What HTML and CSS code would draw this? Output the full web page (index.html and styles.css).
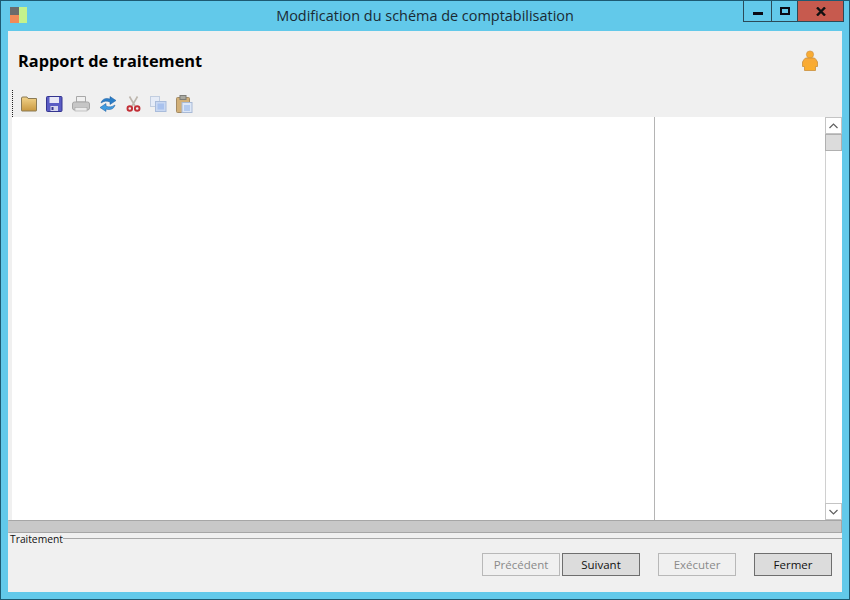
FILE: index.html
```html
<!DOCTYPE html>
<html lang="fr">
<head>
<meta charset="utf-8">
<title>Modification du schéma de comptabilisation</title>
<link rel="stylesheet" href="styles.css">
</head>
<body>
<div class="window">
  <header class="titlebar">
    <svg class="app-icon" width="18" height="18" viewBox="0 0 18 18">
      <rect x="0" y="0" width="9" height="8" fill="#6b6b6b"/>
      <rect x="0" y="8" width="9" height="8" fill="#f08a58"/>
      <rect x="9" y="0" width="8" height="16" fill="#c4f28c"/>
    </svg>
    <div class="title">Modification du schéma de comptabilisation</div>
    <div class="controls">
      <div class="ctl ctl-min"><span class="glyph-min"></span></div>
      <div class="ctl ctl-max"><span class="glyph-max"></span></div>
      <div class="ctl ctl-close">
        <svg width="10" height="9" viewBox="0 0 10 9"><path d="M1 0.5 L9 8.5 M9 0.5 L1 8.5" stroke="#111" stroke-width="2.4" fill="none"/></svg>
      </div>
    </div>
  </header>
  <main class="client">
    <div class="heading">
      <h1>Rapport de traitement</h1>
      <svg class="user" width="18" height="22" viewBox="0 0 18 22">
        <defs>
          <linearGradient id="userFill" x1="0" y1="0" x2="0" y2="1">
            <stop offset="0" stop-color="#f7a93a"/>
            <stop offset="1" stop-color="#fbae2c"/>
          </linearGradient>
        </defs>
        <circle cx="9" cy="4.5" r="3.6" fill="url(#userFill)" stroke="#c98f3e" stroke-width="0.6"/>
        <path d="M4.5 8 H13.5 L15 9.5 L16.5 12 V16.5 H14.5 V20.5 H3.5 V16.5 H1.5 V12 L3 9.5 Z" fill="url(#userFill)" stroke="#c98f3e" stroke-width="0.8"/>
      </svg>
    </div>
    <div class="toolbar">
      <div class="grip"></div>
      <svg class="tool" width="16" height="16" viewBox="0 0 16 16">
        <defs>
          <linearGradient id="folderFill" x1="0" y1="0" x2="0" y2="1">
            <stop offset="0" stop-color="#f2d38a"/>
            <stop offset="1" stop-color="#c9983f"/>
          </linearGradient>
        </defs>
        <path d="M0.5 2 Q0.5 1 2 1 H6 L7 2.5 H15.5 V14.5 Q15.5 15 15 15 H1 Q0.5 15 0.5 14.5 Z" fill="url(#folderFill)" stroke="#8a7a55"/>
      </svg>
      <svg class="tool" width="17" height="16" viewBox="0 0 17 16">
        <rect x="0.5" y="0.5" width="15.5" height="15" rx="1" fill="#5a5cc4" stroke="#34358f"/>
        <rect x="3.5" y="1" width="9.5" height="6" fill="#e8e8f6"/>
        <rect x="4.5" y="10" width="7.5" height="5" fill="#d6d6ee"/>
        <rect x="5.5" y="11" width="2" height="3" fill="#34358f"/>
      </svg>
      <svg class="tool" width="18" height="16" viewBox="0 0 18 16">
        <path d="M4.5 0.5 H13.5 V6 H4.5 Z" fill="#f0f0f0" stroke="#a8a8a8"/>
        <rect x="0.5" y="6" width="17" height="8" rx="2" fill="#c6c6c6" stroke="#a6a6a6"/>
        <rect x="3" y="11.5" width="12" height="3.5" fill="#ececec" stroke="#a8a8a8" stroke-width="0.6"/>
      </svg>
      <svg class="tool" width="18" height="16" viewBox="0 0 18 16">
        <path d="M2 7 C3 3 7 1.5 11 3 L11 0.5 L17 4.5 L11 8.5 L11 6 C8 4.5 5 5 2 7 Z" fill="#2a7ec8" stroke="#1c5a9f" stroke-width="0.5"/>
        <path d="M16 9 C15 13 11 14.5 7 13 L7 15.5 L1 11.5 L7 7.5 L7 10 C10 11.5 13 11 16 9 Z" fill="#3f9be0" stroke="#1c5a9f" stroke-width="0.5"/>
      </svg>
      <svg class="tool" width="15" height="16" viewBox="0 0 15 16">
        <path d="M3.5 0.5 L9 10 M11.5 0.5 L6 10" stroke="#bdb6ad" stroke-width="1.6" fill="none"/>
        <circle cx="3.8" cy="12.5" r="2.3" fill="none" stroke="#c22f36" stroke-width="1.9"/>
        <circle cx="11.2" cy="12.5" r="2.3" fill="none" stroke="#c22f36" stroke-width="1.9"/>
      </svg>
      <svg class="tool" width="17" height="16" viewBox="0 0 17 16">
        <rect x="0.5" y="0.5" width="9" height="10" fill="#e6ecf7" stroke="#c2cee0"/>
        <rect x="5.5" y="5.5" width="10.5" height="10" fill="#c9d8f2" stroke="#a9bcdb"/>
        <rect x="7.5" y="7.5" width="6.5" height="6" fill="#a9c2ee"/>
      </svg>
      <svg class="tool" width="17" height="18" viewBox="0 0 17 18">
        <rect x="0.5" y="2.5" width="13" height="15" rx="1" fill="#d2b078" stroke="#a38a64"/>
        <rect x="4" y="0.5" width="6" height="4" fill="#a8a8a0" stroke="#7d7d78"/>
        <rect x="6" y="7.5" width="10" height="10" fill="#dde7f7" stroke="#a9bad6"/>
        <rect x="8" y="10" width="6" height="6" fill="#b3caef"/>
      </svg>
    </div>
    <div class="report">
      <div class="pane-main"></div>
      <div class="pane-side"></div>
      <div class="scrollbar">
        <div class="arrow"><svg width="9" height="6" viewBox="0 0 9 6"><path d="M0.5 5 L4.5 1 L8.5 5" fill="none" stroke="#606060" stroke-width="1.2"/></svg></div>
        <div class="thumb"></div>
        <div class="track"></div>
        <div class="arrow"><svg width="9" height="6" viewBox="0 0 9 6"><path d="M0.5 1 L4.5 5 L8.5 1" fill="none" stroke="#606060" stroke-width="1.2"/></svg></div>
      </div>
    </div>
    <div class="progress"></div>
    <div class="group">
      <span class="legend">Traitement</span>
      <span class="rule"></span>
    </div>
    <div class="actions">
      <div class="nav">
        <button class="btn" disabled>Précédent</button>
        <button class="btn">Suivant</button>
      </div>
      <button class="btn" disabled>Exécuter</button>
      <button class="btn">Fermer</button>
    </div>
  </main>
</div>
</body>
</html>
```
FILE: styles.css
```css
* { box-sizing: border-box; }
html, body { margin: 0; height: 100%; }
body { font-family: "Open Sans", "Noto Sans", sans-serif; color: #111; }
.window {
  width: 850px;
  height: 600px;
  background: #62c9ea;
  border: 1px solid #1d5a72;
  display: flex;
  flex-direction: column;
  padding: 0 7px 7px;
}
.titlebar {
  height: 30px;
  flex: none;
  display: flex;
  align-items: flex-start;
  position: relative;
}
.app-icon { margin: 6px 0 0 2px; }
.title {
  position: absolute;
  left: 0;
  right: 0;
  top: 5px;
  text-align: center;
  font-size: 14.45px;
  line-height: 20px;
  color: #1a2a33;
}
.controls {
  position: absolute;
  top: 0;
  right: -2px;
  height: 21px;
  display: flex;
  border: 1px solid #2b4a58;
  border-top: 0;
}
.ctl { height: 20px; display: flex; align-items: center; justify-content: center; }
.ctl-min { width: 28px; border-right: 1px solid #2b4a58; }
.ctl-max { width: 26px; border-right: 1px solid #2b4a58; }
.ctl-close { width: 45px; background: #c75a4e; }
.glyph-min { width: 10px; height: 3px; background: #0a0a14; margin-top: 5px; }
.glyph-max { width: 10px; height: 8px; border: 2px solid #0a0a14; }
.client {
  flex: 1;
  background: #f0f0f0;
  display: flex;
  flex-direction: column;
  min-height: 0;
}
.heading {
  height: 59px;
  flex: none;
  display: flex;
  align-items: center;
  justify-content: space-between;
  padding: 0 23px 0 10px;
}
.heading h1 {
  margin: 0;
  font-family: "Open Sans", sans-serif;
  font-size: 16.35px;
  font-weight: 700;
  color: #000;
}
.toolbar {
  height: 27px;
  flex: none;
  display: flex;
  align-items: center;
  padding-left: 4px;
}
.grip { width: 2px; height: 27px; border-left: 1px dotted #222; margin-right: 7px; }
.tool { flex: none; margin-right: 9px; }
.report {
  height: 403px;
  flex: none;
  display: flex;
  margin-left: 4px;
  background: #fff;
}
.pane-main { width: 643px; border-right: 1px solid #b4b4b4; }
.pane-side { flex: 1; }
.scrollbar {
  width: 17px;
  display: flex;
  flex-direction: column;
  background: #fff;
}
.arrow {
  height: 17px;
  display: flex;
  align-items: center;
  justify-content: center;
  border: 1px solid #c4c4c4;
  flex: none;
}
.thumb { height: 17px; flex: none; background: #dcdcdc; border: 1px solid #b0b0b0; }
.track { flex: 1; border-left: 1px solid #d0d0d0; }
.progress {
  height: 13px;
  flex: none;
  background: #c8c8c8;
  border: 1px solid #a6a6a6;
  border-left-color: #c8c8c8;
}
.group {
  height: 12px;
  flex: none;
  display: flex;
  align-items: center;
  padding-left: 2px;
}
.legend { font-size: 10.3px; line-height: 12px; color: #111; }
.rule { flex: 1; height: 1px; background: #a8a8a8; margin-top: -1px; }
.actions {
  display: flex;
  justify-content: flex-end;
  gap: 18px;
  padding: 8px 10px 0 0;
}
.nav { display: flex; gap: 2px; }
.btn {
  width: 78px;
  height: 23px;
  padding: 0;
  font-family: inherit;
  font-size: 11.5px;
  color: #111;
  background: #dcdcdc;
  border: 1px solid #6e6e6e;
}
.btn:disabled {
  background: #f0f0f0;
  border-color: #b8b8b8;
  color: #8a8a8a;
}
```
